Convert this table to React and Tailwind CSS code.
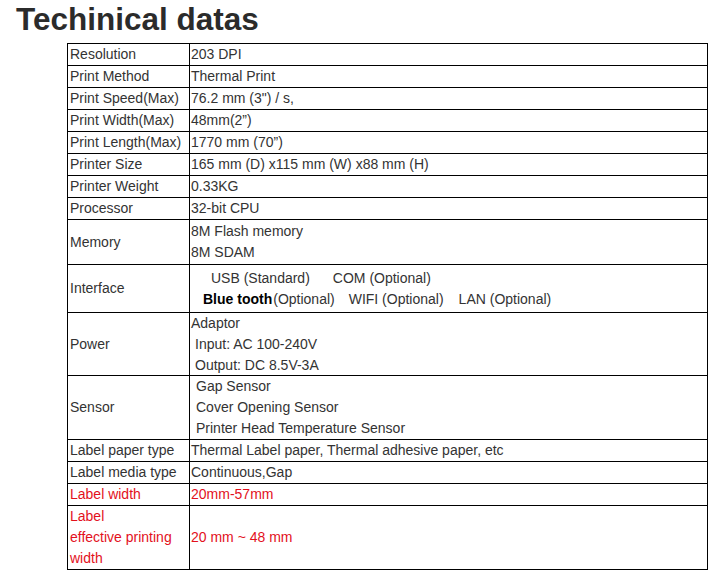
export default function App() {
  const font = { fontFamily: '"Liberation Sans", Arial, sans-serif' };
  const Row = ({ label, h = "h-[22px]", red = false, children }) => (
    <div className={`flex border-b border-black ${h}`}>
      <div
        className={`w-[122px] shrink-0 border-r border-black flex flex-col justify-center pl-[2px] ${red ? "text-[#e3101c]" : ""}`}
      >
        {label}
      </div>
      <div className={`flex-1 flex flex-col justify-center pl-[1px] ${red ? "text-[#e3101c]" : ""}`}>
        {children}
      </div>
    </div>
  );
  return (
    <div className="w-[710px] h-[570px] bg-white text-[#333]" style={font}>
      <h1 className="pl-[16px] text-[31.5px] font-bold leading-[38px] text-[#2b2b2b]">
        Techinical datas
      </h1>
      <div className="mt-[5px] ml-[67px] w-[641px] border-l border-t border-r border-black text-[14px] leading-[21px]">
        <Row label="Resolution">203 DPI</Row>
        <Row label="Print Method">Thermal Print</Row>
        <Row label="Print Speed(Max)">76.2 mm (3") / s,</Row>
        <Row label="Print Width(Max)">48mm(2”)</Row>
        <Row label="Print Length(Max)">1770 mm (70”)</Row>
        <Row label="Printer Size">165 mm (D) x115 mm (W) x88 mm (H)</Row>
        <Row label="Printer Weight">0.33KG</Row>
        <Row label="Processor">32-bit CPU</Row>
        <Row label="Memory" h="h-[45px]">
          <div>8M Flash memory</div>
          <div>8M SDAM</div>
        </Row>
        <Row label="Interface" h="h-[48px]">
          <div className="pl-[20px]">
            <span>USB (Standard)</span>
            <span className="ml-[23px]">COM (Optional)</span>
          </div>
          <div className="pl-[12px]">
            <span className="font-bold text-black">Blue tooth</span>
            <span className="ml-[1px]">(Optional)</span>
            <span className="ml-[14px]">WIFI (Optional)</span>
            <span className="ml-[15px]">LAN (Optional)</span>
          </div>
        </Row>
        <Row label="Power" h="h-[63px]">
          <div>Adaptor</div>
          <div className="pl-[4px]">Input: AC 100-240V</div>
          <div className="pl-[4px]">Output: DC 8.5V-3A</div>
        </Row>
        <Row label="Sensor" h="h-[64px]">
          <div className="pl-[5px]">Gap Sensor</div>
          <div className="pl-[5px]">Cover Opening Sensor</div>
          <div className="pl-[5px]">Printer Head Temperature Sensor</div>
        </Row>
        <Row label="Label paper type">Thermal Label paper, Thermal adhesive paper, etc</Row>
        <Row label="Label media type">Continuous,Gap</Row>
        <Row label="Label width" red>20mm-57mm</Row>
        <Row
          label={
            <>
              <div>Label</div>
              <div>effective printing</div>
              <div>width</div>
            </>
          }
          h="h-[64px]"
          red
        >
          20 mm ~ 48 mm
        </Row>
      </div>
    </div>
  );
}
